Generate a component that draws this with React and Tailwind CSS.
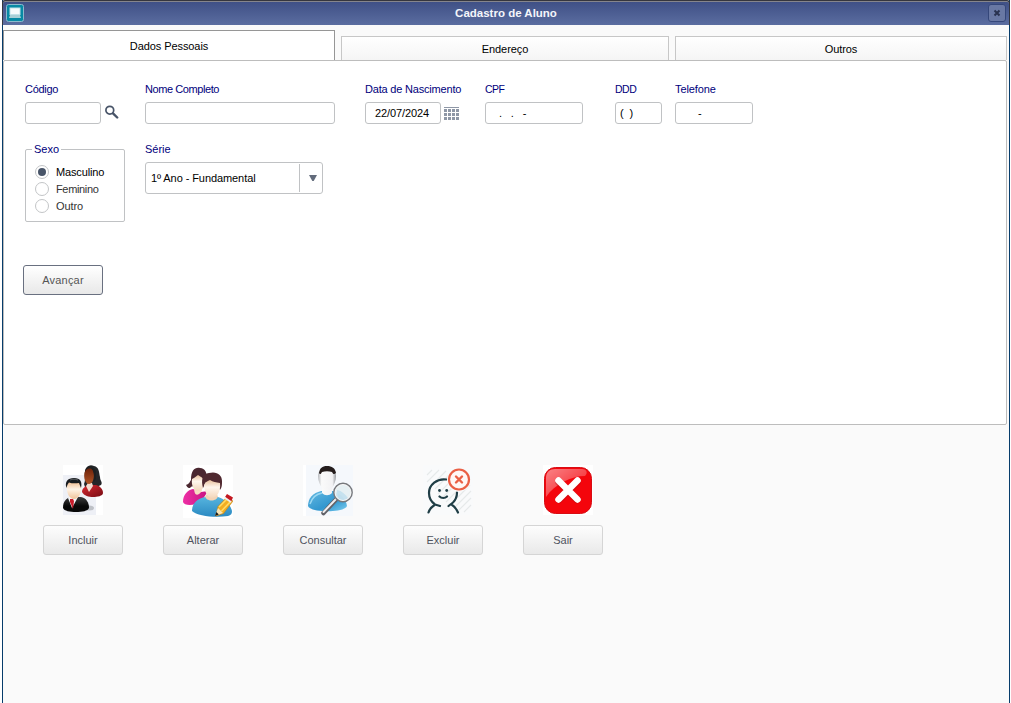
import React from "react";

const label = "h-[14px] text-[11px] leading-[14px] text-[#00007c] whitespace-pre";
const box = "h-[22px] rounded-[3px] border border-[#c0c2c4] bg-white text-[11px] leading-[21px] tracking-[-0.1px] text-black whitespace-pre";

function Field({ title, titleClass = "", className, value, after }) {
  return (
    <div className="flex flex-col gap-[6px]">
      <div className={label}><span className={titleClass}>{title}</span></div>
      <div className="flex">
        <div className={`${box} ${className}`}>{value}</div>
        {after}
      </div>
    </div>
  );
}

function SearchIcon() {
  return (
    <svg width="14" height="14" viewBox="0 0 14 14" className="ml-[4px] mt-[3px]" fill="none" stroke="#485468">
      <circle cx="4.8" cy="5.2" r="3.9" strokeWidth="1.7" />
      <path d="M8 8.4L12.2 12.5" strokeWidth="2.4" strokeLinecap="round" />
    </svg>
  );
}

function CalendarIcon() {
  return (
    <svg width="15" height="13" viewBox="0 0 15 13" className="ml-[3px] mt-[5px]" fill="#8e97a6" shapeRendering="crispEdges">
      <rect width="15" height="1" />
      {[2, 6, 10].map((y) => [0, 4, 8, 12].map((x) => <rect key={`${x}-${y}`} x={x} y={y} width="3" height="3" />))}
    </svg>
  );
}

function IncludeIcon() {
  return (
    <svg width="50" height="50" viewBox="0 0 50 50">
      <defs>
        <linearGradient id="in-suit" x2="0" y2="1"><stop stopColor="#3c3c3c" /><stop offset=".6" stopColor="#080808" /></linearGradient>
        <linearGradient id="in-red" x2="1" y2="1"><stop stopColor="#d72931" /><stop offset="1" stopColor="#760b13" /></linearGradient>
        <linearGradient id="in-face" x2="0" y2="1"><stop stopColor="#f0b988" /><stop offset=".45" stopColor="#fff4e6" /><stop offset="1" stopColor="#f1c49a" /></linearGradient>
        <linearGradient id="in-dark" x2="0" y2="1"><stop stopColor="#6d2109" /><stop offset="1" stopColor="#b05527" /></linearGradient>
      </defs>
      <path fill="#fff" d="M0 0h40v50H0z" />
      <path fill="#eef0f6" d="M0 10h33v40H0z" />
      <ellipse cx="26" cy="43" rx="5" ry="2.500" fill="#a9acb3" opacity=".7" />
      <path d="M21 19c2-4 0-8 1-13C23 1 27-1 31 1c5 1 5 6 6 11 0 4 3 5 1 8l-7 3-9-1z" fill="#242629" />
      <path d="M19 27c0-4 4-6 6-7h8c4 1 7 4 7 8 0 3-6 4-10 4s-9-1-11-5z" fill="url(#in-red)" />
      <path d="M23 21l3 6 4-6-1-3h-4z" fill="#f4dcd0" />
      <path d="M21.500 8c1-4 4-6 7-4 2 1 2.500 3 2.500 6 0 5-2 9-5 9-3.500 0-5.500-6-4.500-11z" fill="url(#in-dark)" />
      <path d="M22 7c1-3 3-4 6-4 3 3 3.500 8 2.500 14l2.500-3V6l-4-5c-4 0-7 2-7 6z" fill="#1d1f21" />
      <path d="M0 43c0-7 3-9 7-11h11c5 1 8 5 8 11-1 3-7 4-13 4S1 46 0 43z" fill="url(#in-suit)" />
      <path d="M5 33l4 10 6-11-3-2H7z" fill="#f3f4f6" />
      <path d="M7 34h3l1 2-1 8-3-7z" fill="#c81c2a" />
      <path d="M4 20c1-5 13-5 14 0 1 7-2 14-7 14S3 27 4 20z" fill="url(#in-face)" />
      <path d="M3.500 23c-2-6 1-10 7.500-10s8.500 4 7 10l-2-5c-4 .5-7 .5-10-.5-1.500 1.500-2 3.500-2.500 5.500z" fill="#191c1f" />
      <path d="M7 15c3-1 5-1 8 0" fill="none" stroke="#55595d" />
    </svg>
  );
}

function EditIcon() {
  return (
    <svg width="50" height="53" viewBox="0 0 50 53">
      <defs>
        <linearGradient id="ed-pink" x2="1"><stop stopColor="#ee2fa5" /><stop offset="1" stopColor="#c71280" /></linearGradient>
        <linearGradient id="ed-blue" x2="0" y2="1"><stop stopColor="#56b4de" /><stop offset="1" stopColor="#2b8ac2" /></linearGradient>
        <linearGradient id="ed-skin" x2="0" y2="1"><stop stopColor="#e9bf9b" /><stop offset=".4" stopColor="#fff6ed" /><stop offset="1" stopColor="#f3d6ba" /></linearGradient>
      </defs>
      <path fill="#fff" d="M0 0h50v53H0z" />
      <path d="M8 15C8 5 12 2 17 3c5 0 8 5 6 13l-9 8c-5-4-5-3-7-1-3 0-3-2-4-3 3-1 3-2 5-5z" fill="#4b2730" />
      <path d="M0 37c0-8 5-12 10-13l8 3 7-1-7 11C11 41 1 41 0 37z" fill="url(#ed-pink)" />
      <path d="M11 22c0 10 4 9 8 4l-2-5z" fill="#f6dcc2" />
      <path d="M9 14c3-1 4-3 6-4 3 2 6 3 6 7 0 6-2 9-6 9s-7-6-6-12z" fill="url(#ed-skin)" />
      <path d="M9 46c0-8 5-12 13-14h13c6 2 12 6 14 14 0 3-1 4-4 5-13 2-31 0-36-5z" fill="url(#ed-blue)" />
      <path d="M22 31c1 6 12 6 13 0l-3-3h-7z" fill="#f3d3b5" />
      <path d="M20 23c-2-8-1-14 6-15 8-2 13 2 13 8 0 4 0 6-2 9l-3-6-11-2z" fill="#502930" />
      <path d="M21 20c1-3 4-4 6-5 3 2 6 2 10 3 1 8-3 15-8 15-4 0-8-7-8-13z" fill="url(#ed-skin)" />
      <path d="M35 41.500L44 32l6 4L40.500 48.500 33 51z" fill="#f2ae22" stroke="#be8118" strokeWidth=".6" />
      <path d="M36 42l9-9M38.500 46l10-10.500" stroke="#ffdc66" strokeWidth="1.500" />
      <path d="M42 32l2-3 6 3.500-2 4.500z" fill="#c41922" />
      <path d="M41.500 32.500l6.500 4.500" stroke="#eee" strokeWidth="1.800" />
      <path d="M32 51l3-8 5 5z" fill="#f7e3b6" />
      <path d="M32 51l1.300-4 2.500 2.500z" fill="#191919" />
    </svg>
  );
}

function ConsultIcon() {
  return (
    <svg width="50" height="51" viewBox="0 0 50 51">
      <defs>
        <linearGradient id="co-blue" x2="1" y2="1"><stop stopColor="#65b9e2" /><stop offset=".6" stopColor="#3297cf" /><stop offset="1" stopColor="#7bcdf0" /></linearGradient>
        <linearGradient id="co-face"><stop stopColor="#b5b8bc" /><stop offset=".2" stopColor="#fafafa" /><stop offset=".8" stopColor="#f2f2f4" /><stop offset="1" stopColor="#96999e" /></linearGradient>
      </defs>
      <path fill="#fff" d="M0 0h50v51H0z" />
      <path fill="#f5f8fc" d="M3 0h47v51H3z" />
      <path d="M5 41c0-8 5-13 13-15h12c8 3 13 8 14 15-2 7-37 7-39 0z" fill="url(#co-blue)" />
      <path d="M7 39c2-6 6-10 12-11" fill="none" stroke="#9bd8f2" strokeWidth="1.500" />
      <path d="M15 11c0-5 4-9 9-9s9 4 9 9c0 5-2 9-4 12v5c-3 3-7 3-10 0v-5c-2-3-4-7-4-12z" fill="url(#co-face)" />
      <path d="M16 8C17 3 19 1 24 1s8 2 9 7c-2 2-3 1-4-1-3-1-7-1-10 0-1 2-2 3-3 1z" fill="#251d1c" />
      <path d="M33 34.500L20.500 48" stroke="#626268" strokeWidth="4.500" strokeLinecap="round" />
      <path d="M33 34L20.500 47" stroke="#eeeef0" strokeWidth="2" strokeLinecap="round" />
      <circle cx="40" cy="27.500" r="8.500" fill="#e4eef2" opacity=".9" />
      <path d="M34 25c5 1 8 4 11 8l-4 3c-5 0-7-4-7-11z" fill="#b8dced" opacity=".7" />
      <circle cx="40" cy="27.500" r="9" fill="none" stroke="#77797d" strokeWidth="1.800" />
      <circle cx="40" cy="27.500" r="8" fill="none" stroke="#fafafa" />
    </svg>
  );
}

function DeleteIcon() {
  return (
    <svg width="50" height="50" viewBox="0 0 50 50">
      <path fill="#f9fafb" d="M0 0h50v50H0z" />
      <path d="M4 10L9 5M4 17L16 5M5 24L23 6M12 24L28 8M15 29L29 15M18 34L34 18M23 37L42 18M30 37L47 20M33 41L48 26M36 45L48 33M41 47L48 40" stroke="#e6e9ea" strokeWidth="1.1" />
      <g fill="none" stroke="#203e46" strokeWidth="2.200" strokeLinecap="round" strokeLinejoin="round">
        <path d="M23.500 14.500C14 13 6 20 6 28c0 5 2.500 9 6 11.500l5 1.500M34 27.500c0 4.500-2 8-4 10l-4.500 3.500M11.500 40c-3 2-5 4-6 7.500M28.500 39.500c3.500 2 5 4.500 6.500 8M16.500 31.500c2 2 5.500 2 7.500 0" />
      </g>
      <circle cx="16.500" cy="25.500" r="1.400" fill="#203e46" />
      <circle cx="23.700" cy="25.500" r="1.400" fill="#203e46" />
      <circle cx="36" cy="14.500" r="12" fill="#f9fafb" />
      <circle cx="36" cy="14.500" r="10" fill="#fff7f5" stroke="#ea6045" strokeWidth="2.200" />
      <path d="M33 11.500l6 6M39 11.500l-6 6" stroke="#ea6045" strokeWidth="2.400" strokeLinecap="round" />
    </svg>
  );
}

function ExitIcon() {
  return (
    <svg width="50" height="50" viewBox="0 0 50 50">
      <defs>
        <linearGradient id="ex-shine" x2="1" y2="1"><stop stopColor="#fff" stopOpacity=".5" /><stop offset="1" stopColor="#fff" stopOpacity=".08" /></linearGradient>
      </defs>
      <path fill="#fff" d="M0 0h50v50H0z" />
      <rect x="1.500" y="2.500" width="47" height="46" rx="11" fill="#f4050c" stroke="#d80c13" />
      <path d="M3 32V13C3 7 7 4 12 4h27c5 0 6 4 3 7-14 0-30 8-39 21z" fill="url(#ex-shine)" />
      <path d="M16 17l18 17.500M34 17L16 34.500" stroke="#9c0c11" opacity=".35" strokeWidth="7.500" strokeLinecap="round" />
      <path d="M15.500 15.500l19 19M34.500 15.500l-19 19" stroke="#fff" strokeWidth="6.500" strokeLinecap="round" />
    </svg>
  );
}

const actions = [
  ["Incluir", IncludeIcon],
  ["Alterar", EditIcon],
  ["Consultar", ConsultIcon],
  ["Excluir", DeleteIcon],
  ["Sair", ExitIcon],
];

const options = [
  ["Masculino", "pt-[2px] tracking-[-0.15px] text-black"],
  ["Feminino", "pt-[2px] tracking-[-0.35px] text-[#333]"],
  ["Outro", "pt-[2px] tracking-[-0.1px] text-[#333]"],
];

export default function App() {
  return (
    <div className="h-[703px] w-[1011px] overflow-hidden bg-white pl-[2px] pr-px font-['Liberation_Sans',Arial,sans-serif]">
      <div className="flex h-full flex-col border-x border-[#063c6b] bg-[#fafafa]">
        <header className="-mx-px flex h-[25px] shrink-0 items-start justify-between rounded-t-[3px] border-x border-t border-[#35363e] bg-linear-to-b from-[#3e4f85] to-[#5b6da0] px-[3px] pt-[3px] shadow-[inset_0_1px_0_#85858c]">
          <svg width="18" height="18" viewBox="0 0 18 18">
            <rect x=".5" y=".5" width="17" height="17" rx="2" fill="#0789a4" stroke="#8bb9cd" />
            <rect x="4" y="4" width="10" height="6.500" fill="#f6fafb" stroke="#c2e2e8" />
            <path d="M4 11h10l1 3H3z" fill="#a9cfd6" />
          </svg>
          <h1 className="mt-px text-[11.5px] font-bold leading-[16px] text-[#f4f5fa]">Cadastro de Aluno</h1>
          <button className="flex h-[18px] w-[18px] items-center justify-center rounded-[3px] border border-[#35477a] bg-[#6978a4]">
            <svg width="8" height="8" viewBox="0 0 8 8"><path d="M1.5 1.5l5 5M6.5 1.5l-5 5" stroke="#293250" strokeWidth="2" /></svg>
          </button>
        </header>

        <nav className="flex h-[35px] shrink-0 items-end gap-[6px] text-[11px] tracking-[-0.08px] text-black">
          <button className="h-[30px] w-[332px] border border-b-0 border-[#969696] bg-white pt-[2px]">Dados Pessoais</button>
          <button className="h-[24px] w-[328px] border border-b-0 border-[#c7c7c7] bg-linear-to-b from-white to-[#f5f5f5] pt-[2px]">Endereço</button>
          <button className="h-[24px] w-[332px] border border-b-0 border-[#c7c7c7] bg-linear-to-b from-white to-[#f5f5f5] pt-[2px]">Outros</button>
        </nav>

        <main className="h-[365px] w-[1004px] shrink-0 rounded-[2px] border border-[#bdbdbd] bg-white pl-[21px] pt-[21px]">
          <div className="flex">
            <div className="w-[120px]"><Field title="Código" titleClass="tracking-[-0.3px]" className="w-[76px]" after={<SearchIcon />} /></div>
            <div className="w-[220px]"><Field title="Nome Completo" titleClass="tracking-[-0.42px]" className="w-[190px]" /></div>
            <div className="w-[120px]"><Field title="Data de Nascimento" titleClass="tracking-[-0.19px]" className="w-[76px] pl-[9px]" value="22/07/2024" after={<CalendarIcon />} /></div>
            <div className="w-[130px]"><Field title="CPF" titleClass="text-[10.5px] tracking-[-0.6px]" className="w-[98px] pl-[13px]" value=".   .   -" /></div>
            <div className="w-[60px]"><Field title="DDD" titleClass="text-[10.5px] tracking-[-0.5px]" className="w-[47px] pl-[4px]" value="(  )" /></div>
            <Field title="Telefone" titleClass="tracking-[-0.1px]" className="w-[78px] pl-[22px]" value="-" />
          </div>

          <div className="mt-[18px] flex">
            <fieldset className="mt-[7px] flex h-[73px] w-[100px] flex-col rounded-[2px] border border-[#c0c2c4]">
              <div className="-mt-[8px] ml-[6px] h-[14px] w-[29px] bg-white px-[2px] text-[11px] leading-[14px] text-[#00007c]">Sexo</div>
              <div className="mt-[7px] flex flex-col pl-[9px]">
                {options.map(([t, cls], i) => (
                  <label key={t} className="flex h-[17px] items-center gap-[7px] text-[11px]">
                    <span className="flex h-[14px] w-[14px] items-center justify-center rounded-full border border-[#c3c5c7] bg-white">
                      {i === 0 && <span className="h-[8px] w-[8px] rounded-full bg-[#485468]" />}
                    </span>
                    <span className={cls}>{t}</span>
                  </label>
                ))}
              </div>
            </fieldset>
            <div className="ml-[20px]">
              <div className={label}>Série</div>
              <div className="mt-[6px] flex h-[32px] w-[178px] items-center rounded-[3px] border border-[#c0c2c4] bg-white">
                <span className="w-[153px] pl-[5px] text-[11px] tracking-[-0.08px] text-black">1º Ano - Fundamental</span>
                <span className="flex h-[28px] flex-1 items-center border-l border-[#c0c2c4] pl-[9px]">
                  <svg width="8" height="6" viewBox="0 0 8 6"><path d="M0 0h8L4.7 6H3.3z" fill="#626b7b" /></svg>
                </span>
              </div>
            </div>
          </div>

          <button className="-ml-[2px] mt-[43px] h-[30px] w-[80px] rounded-[3px] border border-[#697080] bg-linear-to-b from-white to-[#e8e8e8] text-[11px] tracking-[0.2px] text-[#555]">Avançar</button>
        </main>

        <footer className="flex gap-[40px] pl-[40px] pt-[40px]">
          {actions.map(([name, Icon]) => (
            <div key={name} className="w-[80px]">
              <div className="ml-[20px] h-[60px]"><Icon /></div>
              <button className="h-[30px] w-[80px] rounded-[3px] border border-[#d5d5d5] bg-linear-to-b from-[#fdfdfd] to-[#e9e9e9] text-[11px] text-[#4f535e]">{name}</button>
            </div>
          ))}
        </footer>
      </div>
    </div>
  );
}
